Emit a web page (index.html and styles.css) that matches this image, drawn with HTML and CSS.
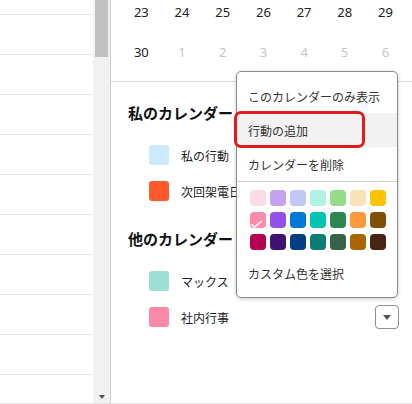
FILE: index.html
```html
<!DOCTYPE html>
<html lang="ja">
<head>
<meta charset="utf-8">
<title>カレンダー</title>
<link rel="stylesheet" href="styles.css">
</head>
<body>
<div class="app">
  <div class="list">
    <div class="list-row"></div><div class="list-row"></div><div class="list-row"></div>
    <div class="list-row"></div><div class="list-row"></div><div class="list-row"></div>
    <div class="list-row"></div><div class="list-row"></div><div class="list-row"></div>
    <div class="list-row"></div>
  </div>
  <div class="scrollbar">
    <div class="thumb"></div>
    <div class="arrow-down"></div>
  </div>
  <div class="panel">
    <div class="calendar">
      <span>23</span><span>24</span><span>25</span><span>26</span><span>27</span><span>28</span><span>29</span>
      <span>30</span><span class="other">1</span><span class="other">2</span><span class="other">3</span><span class="other">4</span><span class="other">5</span><span class="other">6</span>
    </div>
    <div class="section">
      <div class="section-title">私のカレンダー</div>
      <div class="cal-item"><span class="swatch sw-blue"></span><span class="name">私の行動</span></div>
      <div class="cal-item"><span class="swatch sw-orange"></span><span class="name">次回架電日</span></div>
    </div>
    <div class="section">
      <div class="section-title">他のカレンダー</div>
      <div class="cal-item"><span class="swatch sw-mint"></span><span class="name">マックス</span></div>
      <div class="cal-item"><span class="swatch sw-pink"></span><span class="name">社内行事</span>
        <span class="drop-btn"><span class="tri"></span></span>
      </div>
    </div>
  </div>
</div>

<div class="menu">
  <div class="menu-item">このカレンダーのみ表示</div>
  <div class="menu-item active">行動の追加</div>
  <div class="menu-item">カレンダーを削除</div>
  <div class="menu-sep"></div>
  <div class="colors">
    <span class="c" style="background:#fcdce4"></span>
    <span class="c" style="background:#c4a2ef"></span>
    <span class="c" style="background:#c1c8f6"></span>
    <span class="c" style="background:#aef2e2"></span>
    <span class="c" style="background:#95dc8a"></span>
    <span class="c" style="background:#f9e3b6"></span>
    <span class="c" style="background:#ffc300"></span>
    <span class="c" style="background:#ff8aa9"><svg class="check" width="16" height="16" viewBox="0 0 16 16"><path d="M1.5 12 L4.5 15 L12 9" fill="none" stroke="#fff" stroke-width="1.6"/></svg></span>
    <span class="c" style="background:#9350e6"></span>
    <span class="c" style="background:#0276d6"></span>
    <span class="c" style="background:#00c4b2"></span>
    <span class="c" style="background:#2d8650"></span>
    <span class="c" style="background:#ff9a3c"></span>
    <span class="c" style="background:#7e5000"></span>
    <span class="c" style="background:#b5004f"></span>
    <span class="c" style="background:#3f1170"></span>
    <span class="c" style="background:#003f84"></span>
    <span class="c" style="background:#0b7e74"></span>
    <span class="c" style="background:#366348"></span>
    <span class="c" style="background:#a96500"></span>
    <span class="c" style="background:#4a2412"></span>
  </div>
  <div class="menu-item">カスタム色を選択</div>
</div>
<div class="focus-ring"></div>
</body>
</html>
```
FILE: styles.css
```css
html, body {
  margin: 0;
  padding: 0;
}
body {
  width: 412px;
  height: 404px;
  overflow: hidden;
  position: relative;
  background: #fff;
  font-family: "Noto Sans CJK JP", "Noto Sans", sans-serif;
  color: #222;
}
.app {
  display: flex;
  height: 404px;
  box-sizing: border-box;
  border-bottom: 1px solid #e6e6e6;
}
.list {
  width: 93px;
  padding-top: 14px;
  overflow: hidden;
  flex: none;
}
.list-row {
  height: 40px;
  box-sizing: border-box;
  border-top: 1px solid #e6e6e6;
}
.scrollbar {
  width: 17px;
  flex: none;
  background: #f1f1f1;
  border-right: 1px solid #cdcdcd;
  display: flex;
  flex-direction: column;
  justify-content: space-between;
  align-items: center;
}
.thumb {
  width: 13px;
  height: 57px;
  background: #c1c1c1;
}
.arrow-down {
  width: 0;
  height: 0;
  border-left: 3.5px solid transparent;
  border-right: 3.5px solid transparent;
  border-top: 4px solid #505050;
  margin-bottom: 4px;
}
.panel {
  flex: 1;
  min-width: 0;
  overflow: hidden;
}
.calendar {
  display: grid;
  grid-template-columns: repeat(7, 40.7px);
  grid-auto-rows: 40px;
  margin-top: -8px;
  padding: 0 0 9px 10px;
  border-bottom: 1px solid #dcdcdc;
  font-family: "Noto Sans", sans-serif;
  font-size: 13px;
}
.calendar span {
  display: flex;
  align-items: center;
  justify-content: center;
  color: #222;
}
.calendar .other {
  color: #c6c6c6;
}
.section {
  padding-left: 17px;
}
.section-title {
  font-size: 15px;
  font-weight: bold;
  line-height: 20px;
  margin: 21px 0 14px;
  white-space: nowrap;
  color: #111;
}
.section + .section .section-title {
  margin-top: 20px;
}
.cal-item {
  height: 36px;
  display: flex;
  align-items: center;
  gap: 12px;
  padding-left: 21px;
  padding-right: 13px;
}
.swatch {
  width: 20px;
  height: 20px;
  border-radius: 3px;
  flex: none;
}
.sw-blue { background: #cde9fd; }
.sw-orange { background: #ff5a2c; }
.sw-mint { background: #9ce0d5; }
.sw-pink { background: #fc89a8; }
.name {
  font-size: 12px;
  white-space: nowrap;
  color: #222;
}
.drop-btn {
  margin-left: auto;
  width: 24px;
  height: 24px;
  box-sizing: border-box;
  border: 1px solid #8e8e8e;
  border-radius: 4px;
  display: flex;
  align-items: center;
  justify-content: center;
}
.tri {
  width: 0;
  height: 0;
  border-left: 4.5px solid transparent;
  border-right: 4.5px solid transparent;
  border-top: 5px solid #555;
  margin-top: 1px;
}
.menu {
  position: absolute;
  left: 236px;
  top: 71px;
  width: 162px;
  height: 227px;
  box-sizing: border-box;
  background: #fff;
  border: 1px solid #8a8a8a;
  border-radius: 5px;
  box-shadow: 0 1px 4px rgba(0,0,0,0.2);
  padding-top: 7px;
  font-size: 12px;
  color: #333;
}
.menu-item {
  height: 34px;
  display: flex;
  align-items: center;
  padding-left: 11px;
  white-space: nowrap;
}
.menu-item.active {
  background: #f2f2f2;
}
.menu-sep {
  height: 1px;
  background: #cfcfcf;
}
.colors {
  display: grid;
  grid-template-columns: repeat(7, 16px);
  grid-auto-rows: 16px;
  column-gap: 4px;
  row-gap: 6px;
  padding: 8px 0 6px 13px;
}
.c {
  border-radius: 4px;
  position: relative;
  overflow: hidden;
}
.check {
  position: absolute;
  left: 0;
  top: 0;
}
.focus-ring {
  position: absolute;
  left: 234px;
  top: 111px;
  width: 131px;
  height: 37px;
  box-sizing: border-box;
  border: 3px solid #e01b1b;
  border-radius: 7px;
}
```
